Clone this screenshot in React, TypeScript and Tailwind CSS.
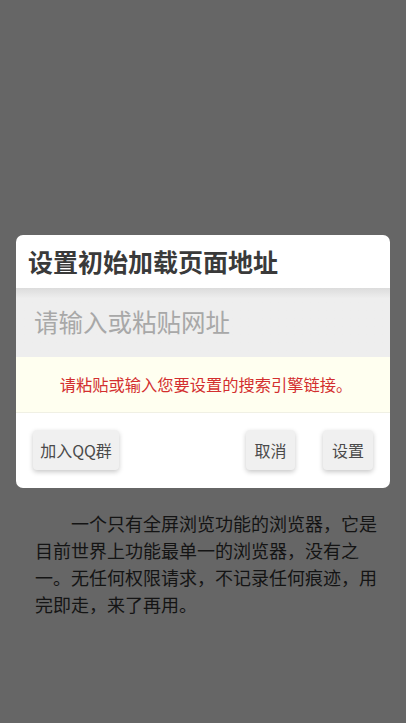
import React from "react";

export default function App() {
  const cjk = { fontFamily: '"Noto Sans CJK SC", "Noto Sans", sans-serif' };
  return (
    <div className="relative w-[406px] h-[723px] overflow-hidden bg-[#666666]" style={cjk}>
      <div className="pt-[510px] pl-[35px] w-[386px]">
        <p className="text-[18px] leading-[27px] text-[#141414] indent-[36px]">
          一个只有全屏浏览功能的浏览器，它是目前世界上功能最单一的浏览器，没有之一。无任何权限请求，不记录任何痕迹，用完即走，来了再用。
        </p>
      </div>

      <div className="absolute left-[16px] top-[235px] w-[374px] h-[253px] bg-white rounded-[7px] overflow-hidden flex flex-col">
        <div className="h-[53px] flex items-center pl-[12px] text-[25px] font-bold text-[#3a3a3a]">
          设置初始加载页面地址
        </div>
        <div className="h-[69px] flex items-center pl-[18px] text-[24.5px] text-[#a8a8a8] bg-[#eeeeee] bg-gradient-to-b from-[#dcdcdc] via-[#eeeeee] via-[15%] to-[#eeeeee]">
          请输入或粘贴网址
        </div>
        <div className="h-[56px] flex items-center justify-center pl-[6px] text-[16.25px] text-[#d32f2f] bg-[#fffff0] border-b border-[#f0f0e4]">
          请粘贴或输入您要设置的搜索引擎链接。
        </div>
        <div className="flex-1 flex items-center px-[17px] pb-[1px]">
          <button className="h-[40px] w-[86px] rounded-[4px] bg-[#f0f0f0] text-[16px] text-[#4a4a4a] shadow-[0_2px_5px_rgba(0,0,0,0.22)]">
            加入QQ群
          </button>
          <div className="flex-1" />
          <button className="h-[40px] w-[49px] rounded-[4px] bg-[#f0f0f0] text-[16px] text-[#4a4a4a] shadow-[0_2px_5px_rgba(0,0,0,0.22)]">
            取消
          </button>
          <button className="ml-[28px] h-[40px] w-[50px] rounded-[4px] bg-[#f0f0f0] text-[16px] text-[#4a4a4a] shadow-[0_2px_5px_rgba(0,0,0,0.22)]">
            设置
          </button>
        </div>
      </div>
    </div>
  );
}
